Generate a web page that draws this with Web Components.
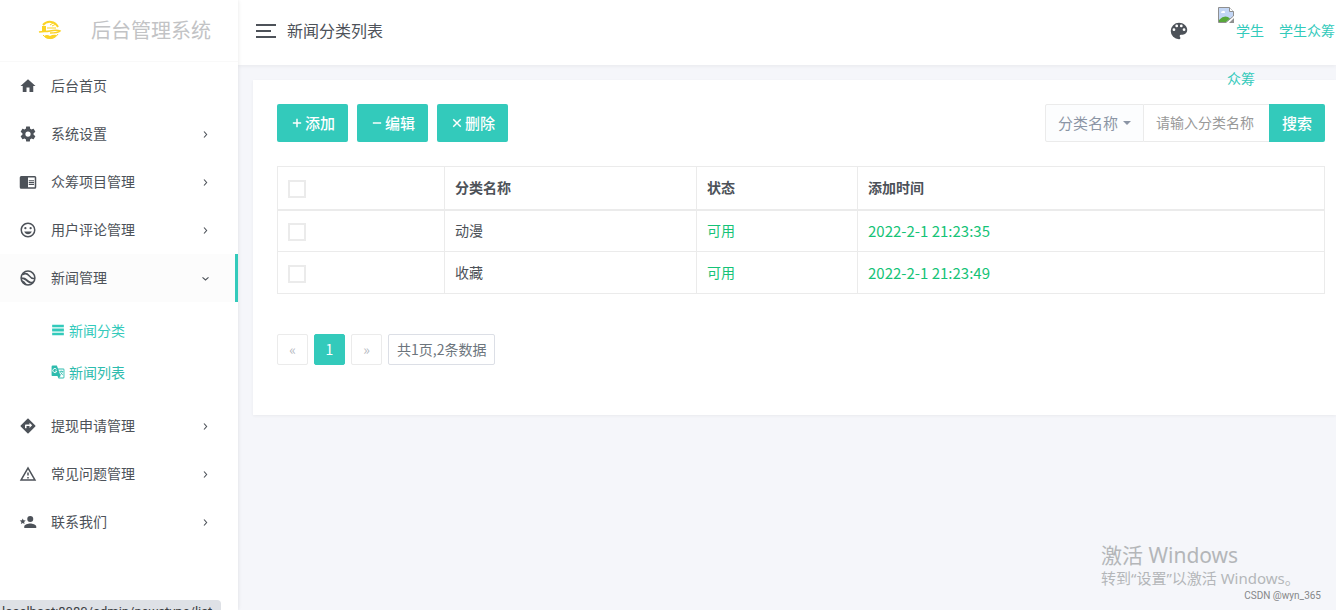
<!DOCTYPE html>
<html lang="zh-CN">
<head>
<meta charset="utf-8">
<title>新闻分类列表</title>
<style>
  html { --primary: #33cabb; --line: #ebebeb; --ink: #4d5259; --muted: #8b95a5; }
  body { margin: 0; background: #f5f6fa; color: var(--ink); font: 14px/21px "Noto Sans CJK SC", "Noto Sans", sans-serif; }
</style>
</head>
<body>
<admin-layout>
  <side-bar slot="side">
    <nav-item icon="home">后台首页</nav-item>
    <nav-item icon="cog" more>系统设置</nav-item>
    <nav-item icon="reader" more>众筹项目管理</nav-item>
    <nav-item icon="smile" more>用户评论管理</nav-item>
    <nav-item icon="earth" more open>新闻管理
      <sub-item slot="sub" icon="bars">新闻分类</sub-item>
      <sub-item slot="sub" icon="translate" visited>新闻列表</sub-item>
    </nav-item>
    <nav-item icon="turn" more>提现申请管理</nav-item>
    <nav-item icon="alert" more>常见问题管理</nav-item>
    <nav-item icon="person" more>联系我们</nav-item>
  </side-bar>
  <top-bar slot="top">新闻分类列表</top-bar>
  <content-card>
    <tool-bar>
      <action-button icon="plus">添加</action-button>
      <action-button icon="minus">编辑</action-button>
      <action-button icon="close">删除</action-button>
      <search-group slot="end"></search-group>
    </tool-bar>
    <category-table></category-table>
    <page-nav></page-nav>
  </content-card>
</admin-layout>
<os-watermark></os-watermark>
<status-bubble>localhost:8080/admin/newstype/list</status-bubble>

<script>
const ICONS = {
  home: '<path d="M10,20V14H14V20H19V12H22L12,3L2,12H5V20H10Z"/>',
  cog: '<path d="M12,15.5A3.5,3.5 0 0,1 8.5,12A3.5,3.5 0 0,1 12,8.5A3.5,3.5 0 0,1 15.5,12A3.5,3.5 0 0,1 12,15.5M19.43,12.97C19.47,12.65 19.5,12.33 19.5,12C19.5,11.67 19.47,11.34 19.43,11L21.54,9.37C21.73,9.22 21.78,8.95 21.66,8.73L19.66,5.27C19.54,5.05 19.27,4.96 19.05,5.05L16.56,6.05C16.04,5.66 15.5,5.32 14.87,5.07L14.5,2.42C14.46,2.18 14.25,2 14,2H10C9.75,2 9.54,2.18 9.5,2.42L9.13,5.07C8.5,5.32 7.96,5.66 7.44,6.05L4.95,5.05C4.73,4.96 4.46,5.05 4.34,5.27L2.34,8.73C2.21,8.95 2.27,9.22 2.46,9.37L4.57,11C4.53,11.34 4.5,11.67 4.5,12C4.5,12.33 4.53,12.65 4.57,12.97L2.46,14.63C2.27,14.78 2.21,15.05 2.34,15.27L4.34,18.73C4.46,18.95 4.73,19.03 4.95,18.95L7.44,17.94C7.96,18.34 8.5,18.68 9.13,18.93L9.5,21.58C9.54,21.82 9.75,22 10,22H14C14.25,22 14.46,21.82 14.5,21.58L14.87,18.93C15.5,18.67 16.04,18.34 16.56,17.94L19.05,18.95C19.27,19.03 19.54,18.95 19.66,18.73L21.66,15.27C21.78,15.05 21.73,14.78 21.54,14.63L19.43,12.97Z"/>',
  reader: '<path d="M13,12H20V13.5H13M13,9.5H20V11H13M13,14.5H20V16H13M21,4H3A2,2 0 0,0 1,6V19A2,2 0 0,0 3,21H21A2,2 0 0,0 23,19V6A2,2 0 0,0 21,4M21,19H12V6H21"/>',
  smile: '<path d="M12,17.5C14.33,17.5 16.3,16.04 17.11,14H6.89C7.69,16.04 9.67,17.5 12,17.5M8.5,11A1.5,1.5 0 0,0 10,9.5A1.5,1.5 0 0,0 8.5,8A1.5,1.5 0 0,0 7,9.5A1.5,1.5 0 0,0 8.5,11M15.5,11A1.5,1.5 0 0,0 17,9.5A1.5,1.5 0 0,0 15.5,8A1.5,1.5 0 0,0 14,9.5A1.5,1.5 0 0,0 15.5,11M12,20A8,8 0 0,1 4,12A8,8 0 0,1 12,4A8,8 0 0,1 20,12A8,8 0 0,1 12,20M12,2C6.47,2 2,6.5 2,12A10,10 0 0,0 12,22A10,10 0 0,0 22,12A10,10 0 0,0 12,2Z"/>',
  earth: '<g fill="none" stroke="currentColor" stroke-width="2"><circle cx="12" cy="12" r="9.200"/><path d="M5 7.500C8.500 5 11 6 13.500 9S18.500 13.500 21 12.500"/></g><path d="M3 11C7 11 9 12 12 14.500S17 17.500 20 16L18 19C14 19.500 12 18 9.500 16S5 13.500 3 14ZM3 15C7 15.500 9 18 10 21.500L6 19.500Z"/>',
  turn: '<path d="M14,14.5V12H10V15H8V11A1,1 0 0,1 9,10H14V7.5L17.5,11M21.71,11.29L12.71,2.29H12.7C12.31,1.9 11.68,1.9 11.29,2.29L2.29,11.29C1.9,11.68 1.9,12.32 2.29,12.71L11.29,21.71C11.68,22.09 12.31,22.1 12.71,21.71L21.71,12.71C22.1,12.32 22.1,11.68 21.71,11.29Z"/>',
  alert: '<path d="M12,2L1,21H23M12,6L19.53,19H4.47M11,10V14H13V10M11,16V18H13V16"/>',
  person: '<path d="M15,14C12.33,14 7,15.33 7,18V20H23V18C23,15.33 17.67,14 15,14M15,12A4,4 0 0,0 19,8A4,4 0 0,0 15,4A4,4 0 0,0 11,8A4,4 0 0,0 15,12M5,13.28L7.45,14.77L6.8,11.96L9,10.08L6.11,9.83L5,7.19L3.87,9.83L1,10.08L3.18,11.96L2.5,14.77L5,13.28Z"/>',
  palette: '<path d="M17.5,12A1.5,1.5 0 0,1 16,10.5A1.5,1.5 0 0,1 17.5,9A1.5,1.5 0 0,1 19,10.5A1.5,1.5 0 0,1 17.5,12M14.5,8A1.5,1.5 0 0,1 13,6.5A1.5,1.5 0 0,1 14.5,5A1.5,1.5 0 0,1 16,6.5A1.5,1.5 0 0,1 14.5,8M9.5,8A1.5,1.5 0 0,1 8,6.5A1.5,1.5 0 0,1 9.5,5A1.5,1.5 0 0,1 11,6.5A1.5,1.5 0 0,1 9.5,8M6.5,12A1.5,1.5 0 0,1 5,10.5A1.5,1.5 0 0,1 6.5,9A1.5,1.5 0 0,1 8,10.5A1.5,1.5 0 0,1 6.5,12M12,3A9,9 0 0,0 3,12A9,9 0 0,0 12,21A1.5,1.5 0 0,0 13.5,19.5C13.5,19.11 13.35,18.76 13.11,18.5C12.88,18.23 12.73,17.88 12.73,17.5A1.5,1.5 0 0,1 14.23,16H16A5,5 0 0,0 21,11C21,6.58 16.97,3 12,3Z"/>',
  bars: '<path d="M2 3H22V7H2ZM2 10H22V14H2ZM2 17H22V21H2Z"/><path opacity=".3" d="M2 7H22V17H2Z"/>',
  translate: '<path fill-rule="evenodd" d="M3 1H10L12 6H21A2 2 0 0 1 23 8V21A2 2 0 0 1 21 23H13L11 19H3A2 2 0 0 1 1 17V3A2 2 0 0 1 3 1ZM12.600 7.500L16.500 19L14 21.500H21.500V7.500Z"/><path fill="none" stroke="#fff" stroke-width="1.600" d="M9.500 7.500A3.500 3.500 0 1 0 10 10.500H7"/><path fill="none" stroke="currentColor" stroke-width="1.400" d="M14.500 11H21M17.500 9.500V11M20 11C19 14 17.500 15.500 16 16.500M16 12.500L20.500 17.500"/>',
  plus: '<path fill="none" stroke="currentColor" stroke-width="3.500" d="M12 2V22M2 12H22"/>',
  minus: '<path fill="none" stroke="currentColor" stroke-width="3.500" d="M2 12H22"/>',
  close: '<path fill="none" stroke="currentColor" stroke-width="3.500" d="M3 3L21 21M21 3L3 21"/>',
  right: '<path fill="none" stroke="currentColor" stroke-width="3" d="M8 4L15 12L8 20"/>',
  down: '<path fill="none" stroke="currentColor" stroke-width="3" d="M4 9L12 16L20 9"/>'
};
const svg = (name, size) => `<svg class="icon" width="${size}" height="${size}" viewBox="0 0 24 24" fill="currentColor" aria-hidden="true">${ICONS[name]}</svg>`;

const define = (name, render) => customElements.define(name, class extends HTMLElement {
  constructor() { super(); this.attachShadow({ mode: 'open' }); }
  connectedCallback() {
    this.shadowRoot.innerHTML = '<style>*{box-sizing:border-box}svg{display:block;flex:none}a{color:inherit;text-decoration:none}button,input,select{font:inherit;margin:0}</style>' + render(this);
  }
});

define('admin-layout', () => `<style>
  :host{display:grid;grid-template-columns:238px minmax(0,1fr);min-height:100vh}
  aside{display:grid;background:#fff;box-shadow:0 0 4px rgba(0,0,0,.1);z-index:2}
  main{padding:15px 0 15px 15px}
</style><aside><slot name="side"></slot></aside>
<div><slot name="top"></slot><main><slot></slot></main></div>`);

define('side-bar', () => `<style>
  :host{display:block}
  .brand{display:flex;align-items:center;gap:29px;height:62px;padding:0 0 2px 38px;color:#c2c3c5;font-size:20px;line-height:30px;border-bottom:1px solid #f9f9f9}
</style><a class="brand" href="#">
<svg width="24" height="24" viewBox="0 0 24 24" fill="none" stroke="#fbd325" aria-hidden="true"><path stroke-width="2" d="M5 7A9 9 0 0 1 20 9"/><path stroke-width="1" d="M12 7L15 5M14 8L18 6M9 10H18M5 17A9 9 0 0 0 20 16"/><path stroke-width="1.500" d="M1 14C5 13 8 14 12 13S20 12 22 13C20 15 15 15 12 15"/><path fill="#fbd325" stroke="none" d="M4 8H8V14H4ZM6 18Q9 16 12 18Q15 16 19 17Q16 21 12 21T6 18Z"/></svg>
<span>后台管理系统</span></a><nav><slot></slot></nav>`);

define('nav-item', el => {
  const open = el.hasAttribute('open');
  return `<style>
  :host{display:block}
  .row{display:flex;align-items:center;height:48px;padding:0 25px 0 19px}
  .open{background:#fcfcfc;border-right:3px solid var(--primary);padding-right:22px}
  .label{margin-left:14px;padding-bottom:2px;flex:1}
  .chev{display:grid;place-items:center;width:16px}
  .sub{padding:8px 0}
</style><a class="row ${open ? 'open' : ''}" href="#">${svg(el.getAttribute('icon'), 18)}<span class="label"><slot></slot></span>${el.hasAttribute('more') ? `<span class="chev">${svg(open ? 'down' : 'right', 9)}</span>` : ''}</a>
${open ? '<div class="sub"><slot name="sub"></slot></div>' : ''}`;
});

define('sub-item', el => `<style>
  :host{display:block;color:${el.hasAttribute('visited') ? '#2ebcae' : 'var(--primary)'}}
  a{display:flex;align-items:center;gap:4px;height:42px;padding:0 0 2px 51px}
</style><a href="#">${svg(el.getAttribute('icon'), 14)}<span><slot></slot></span></a>`);

define('top-bar', () => `<style>
  :host{display:block;position:relative;z-index:1;background:#fff;box-shadow:0 1px 4px rgba(0,0,0,.06)}
  header{display:flex;align-items:center;height:65px;padding:0 1px 4px 18px}
  .menu{display:grid;gap:4px;width:20px;padding:0;border:0;background:none;cursor:pointer}
  .menu i{height:2px;background:var(--ink)} .menu i:nth-child(2){width:15px}
  h1{flex:1;margin:0 0 0 11px;padding-bottom:1px;font-size:16px;font-weight:400;line-height:24px}
  .theme{padding:0;border:0;background:none;color:inherit;margin-right:27px}
  .user{display:flex;align-items:flex-start;align-self:flex-start;gap:14px;padding-top:6px;color:var(--primary);line-height:48px}
  .avatar{width:48px;text-align:center}
  .avatar svg{display:inline-block;vertical-align:top;margin:1px 2px 0 0}
</style><header>
<button class="menu" aria-label="菜单"><i></i><i></i><i></i></button>
<h1><slot></slot></h1>
<button class="theme" aria-label="主题">${svg('palette', 22)}</button>
<a class="user" href="#"><span class="avatar"><svg width="16" height="16" viewBox="0 0 16 16" aria-hidden="true"><path fill="#c3d6f5" stroke="#8f8f8f" d="M.5.5H11.500L15.500 4.500V9L8 15.500H.5Z"/><path fill="#fff" stroke="#8f8f8f" d="M11.500.5V4.500H15.500"/><path fill="#fff" d="M3 6Q3 4 5 4Q7 3 7 6Z"/><path fill="#58a83a" d="M1 15V13Q7 7 12 11.500L8 15Z"/><path fill="#8f8f8f" d="M12 15L16 11V16H11Z"/></svg>学生众筹</span><span>学生众筹</span></a>
</header>`);

define('content-card', () => `<style>
  :host{display:block;background:#fff;padding:24px 11px 50px 24px;box-shadow:0 1px 3px rgba(0,0,0,.05)}
</style><slot></slot>`);

define('tool-bar', () => `<style>
  :host{display:flex;justify-content:space-between;margin-bottom:24px}
  div{display:flex;gap:9px}
</style><div><slot></slot></div><slot name="end"></slot>`);

define('action-button', el => `<style>
  :host{display:block}
  button{display:flex;align-items:center;gap:3px;height:38px;padding:0 13px 0 15px;border:0;border-radius:2px;background:var(--primary);color:#fff;font-size:15px;font-weight:500;line-height:22px;cursor:pointer}
</style><button type="button">${svg(el.getAttribute('icon'), 10)}<span><slot></slot></span></button>`);

define('search-group', () => `<style>
  :host{display:block}
  form{display:flex;height:38px}
  .pick{display:grid;grid-template-columns:1fr;align-items:stretch;width:99px;color:var(--muted)}
  .pick>*{grid-area:1/1}
  select{appearance:none;height:38px;padding:0 12px 2px;border:1px solid var(--line);border-radius:2px 0 0 2px;background:#fcfdfe;color:inherit;font-size:15px}
  .pick svg{align-self:center;justify-self:end;margin-right:13px;pointer-events:none}
  input{width:125px;padding:0 0 2px 12px;border:solid var(--line);border-width:1px 0;background:#fff;color:var(--ink);outline:0}
  input::placeholder{color:#999;opacity:1}
  button{width:56px;padding:0 0 2px;border:0;border-radius:0 2px 2px 0;background:var(--primary);color:#fff;font-size:15px;font-weight:500}
</style><form><label class="pick"><select aria-label="搜索字段"><option>分类名称</option></select><svg width="8" height="4" viewBox="0 0 8 4" fill="currentColor" aria-hidden="true"><path d="M0 0H8L4 4Z"/></svg></label>
<input type="text" placeholder="请输入分类名称" aria-label="分类名称"><button type="button">搜索</button></form>`);

define('category-table', () => {
  const rows = [['动漫', '可用', '2022-2-1 21:23:35'], ['收藏', '可用', '2022-2-1 21:23:49']];
  return `<style>
  :host{display:block;margin-bottom:40px}
  table{width:100%;table-layout:fixed;border-collapse:collapse}
  th,td{height:42px;padding:0 10px;border:1px solid var(--line);text-align:left;vertical-align:middle}
  th{height:43px;padding-bottom:1px;font-weight:700;border-bottom-width:2px}
  .pick{width:167px} .name{width:252px} .state{width:161px}
  .ok{color:#15c377} .time{font-size:15px}
  input{appearance:none;display:block;width:18px;height:18px;margin-top:3px;border:2px solid var(--line);background:#fff}
</style><table><thead><tr><th class="pick"><input type="checkbox" aria-label="全选"></th><th class="name">分类名称</th><th class="state">状态</th><th>添加时间</th></tr></thead>
<tbody>${rows.map(r => `<tr><td><input type="checkbox" aria-label="选择${r[0]}"></td><td>${r[0]}</td><td class="ok">${r[1]}</td><td class="ok time">${r[2]}</td></tr>`).join('')}</tbody></table>`;
});

define('page-nav', () => `<style>
  :host{display:block}
  nav{display:flex;gap:6px}
  a,span{display:grid;place-items:center;min-width:31px;height:31px;border:1px solid var(--line);border-radius:2px;color:#b5b9bf}
  .on{background:var(--primary);border-color:var(--primary);color:#fff}
  .info{padding:0 8px;border-color:#dcdfe6;color:#6c757d}
</style><nav aria-label="分页"><a href="#">«</a><a class="on" href="#">1</a><a href="#">»</a><span class="info">共1页,2条数据</span></nav>`);

define('os-watermark', () => `<style>
  :host{position:absolute;right:15px;bottom:7px;width:220px;z-index:3;color:#b4b6b9;font-family:"Noto Sans","Noto Sans CJK SC",sans-serif;pointer-events:none}
  .big{font-size:21px;line-height:28px} .small{font-size:15px;line-height:19px;white-space:nowrap}
  .by{font:10px/15px Roboto,sans-serif;color:#858789;text-align:right}
</style><div class="big">激活 Windows</div><div class="small">转到“设置”以激活 Windows。</div><div class="by">CSDN @wyn_365</div>`);

define('status-bubble', () => `<style>
  :host{position:absolute;left:0;bottom:0;z-index:4;height:10px;width:221px;overflow:hidden;padding:3px 0 0 2px;box-sizing:border-box;border-radius:0 4px 0 0;background:#dee1e6;color:#3c4043;font:13px/18px Roboto,sans-serif;white-space:nowrap}
</style><slot></slot>`);
</script>
</body>
</html>
